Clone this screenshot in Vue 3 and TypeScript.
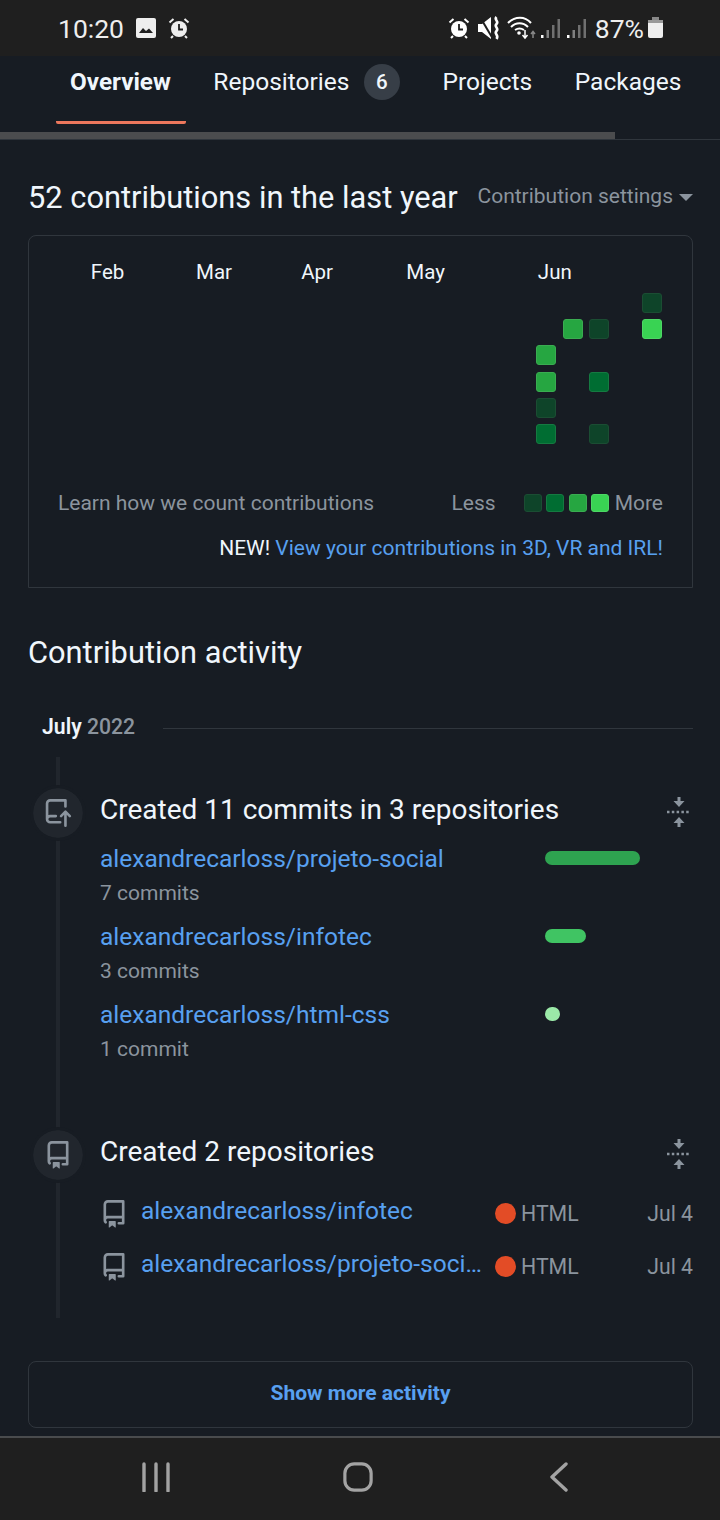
<script setup lang="ts">
const COLS = 23
const ROWS = 7
const levels: Record<string, number> = {
  '22,0': 1, '19,1': 3, '20,1': 1, '22,1': 4, '18,2': 3, '18,3': 3, '20,3': 2,
  '18,4': 1, '18,5': 2, '20,5': 1,
}
const cells: { key: string; level: number }[] = []
for (let r = 0; r < ROWS; r++) {
  for (let c = 0; c < COLS; c++) {
    cells.push({ key: `${c},${r}`, level: levels[`${c},${r}`] ?? 0 })
  }
}
const months = [
  { name: 'Feb', col: 2 }, { name: 'Mar', col: 6 }, { name: 'Apr', col: 10 },
  { name: 'May', col: 14 }, { name: 'Jun', col: 19 },
]
const commits = [
  { repo: 'alexandrecarloss/projeto-social', text: '7 commits', width: 95, cls: 'b1' },
  { repo: 'alexandrecarloss/infotec', text: '3 commits', width: 41, cls: 'b2' },
  { repo: 'alexandrecarloss/html-css', text: '1 commit', width: 15, cls: 'b3' },
]
const created = ['alexandrecarloss/infotec', 'alexandrecarloss/projeto-social']
const repoPath = 'M2 2.5A2.5 2.5 0 014.5 0h8.75a.75.75 0 01.75.75v12.5a.75.75 0 01-.75.75h-2.5a.75.75 0 110-1.5h1.75v-2h-8a1 1 0 00-.714 1.7.75.75 0 01-1.072 1.05A2.495 2.495 0 012 11.5v-9zm10.5-1V9h-8c-.356 0-.694.074-1 .208V2.5a1 1 0 011-1h8zM5 12.25v3.25a.25.25 0 00.4.2l1.45-1.087a.25.25 0 01.3 0L8.6 15.7a.25.25 0 00.4-.2v-3.25a.25.25 0 00-.25-.25h-3.5a.25.25 0 00-.25.25z'
const pushPath = 'M1 2.5A2.5 2.5 0 013.5 0h8.75a.75.75 0 01.75.75v3.5a.75.75 0 01-1.5 0V1.5h-8a1 1 0 00-1 1v6.708A2.492 2.492 0 013.5 9h3.25a.75.75 0 010 1.5H3.5a1 1 0 100 2h5.75a.75.75 0 010 1.5H3.5A2.5 2.5 0 011 11.5v-9zm13.23 7.79a.75.75 0 001.06-1.06l-2.505-2.505a.75.75 0 00-1.06 0L9.22 9.229a.75.75 0 001.06 1.061l1.225-1.224v6.184a.75.75 0 001.5 0V9.066l1.225 1.224z'
</script>

<template>
  <div class="page">
    <div class="status">
      <span class="time">10:20</span>
      <svg class="ic-img" width="20" height="20" viewBox="0 0 20 20"><rect width="20" height="20" rx="2" fill="#eee" /><path d="M3 15l4-5 3 3 3-2.500 4 4.500z" fill="#1f1f1f" /></svg>
      <svg class="ic-alarm" width="22" height="22" viewBox="0 0 22 22"><circle cx="11" cy="12" r="8" fill="#eee" /><path d="M11 7v5.500h4" fill="none" stroke="#1f1f1f" stroke-width="1.800" /><path d="M1.500 5.500L5.500 2M20.500 5.500L16.500 2M5 19l-2 2M17 19l2 2" stroke="#eee" stroke-width="2" /></svg>
      <div class="status-right">
        <svg width="22" height="22" viewBox="0 0 22 22"><circle cx="11" cy="12" r="8" fill="#fff" /><path d="M11 7v5.500h4" fill="none" stroke="#1f1f1f" stroke-width="1.800" /><path d="M1.500 5.500L5.500 2M20.500 5.500L16.500 2M5 19l-2 2M17 19l2 2" stroke="#fff" stroke-width="2" /></svg>
        <svg class="g8" width="22" height="24" viewBox="0 0 22 24"><path d="M0 8h4l9-7v22l-9-7H0z" fill="#fff" /><path d="M2 1l13 22" stroke="#1f1f1f" stroke-width="2" /><path d="M18.500 1c-3 3 3 4 0 7s3 4 0 7 3 4 0 8" fill="none" stroke="#fff" stroke-width="2.600" /></svg>
        <svg class="g7" width="30" height="24" viewBox="0 0 30 24"><path d="M1 7c7-7 17-7 23 0M4 11c5-5 12-5 17 0M8 14c3-2 6-2 9 0" fill="none" stroke="#fff" stroke-width="2" /><circle cx="12" cy="17" r="1.800" fill="#fff" /><path d="M18 14v7M15.500 19l2.500 3 2.500-3" fill="none" stroke="#fff" stroke-width="1.500" /><path d="M26 22v-6M24 18l2-2.500 2 2.500" fill="none" stroke="#888" stroke-width="1.500" /></svg>
        <svg class="g4" width="19" height="22" viewBox="0 0 19 22"><rect x="0" y="18" width="2.500" height="3" fill="#fff" /><rect x="5.500" y="13" width="2.500" height="8" fill="#808080" /><rect x="11" y="8" width="2.500" height="13" fill="#707070" /><rect x="16.500" y="2" width="2.500" height="19" fill="#707070" /></svg>
        <svg class="g7" width="19" height="22" viewBox="0 0 19 22"><rect x="0" y="18" width="2.500" height="3" fill="#fff" /><rect x="5.500" y="13" width="2.500" height="8" fill="#808080" /><rect x="11" y="8" width="2.500" height="13" fill="#707070" /><rect x="16.500" y="2" width="2.500" height="19" fill="#707070" /></svg>
        <span class="pct">87%</span>
        <svg class="g5" width="15" height="22" viewBox="0 0 15 22"><path d="M4 0h7v3H4z" fill="#888" /><path d="M0 3h15v3H0z" fill="#999" /><path d="M0 6h15v13a2 2 0 01-2 2H2a2 2 0 01-2-2z" fill="#eee" /></svg>
      </div>
    </div>

    <nav class="tabs">
      <a class="tab active">Overview</a>
      <a class="tab">Repositories<span class="badge">6</span></a>
      <a class="tab">Projects</a>
      <a class="tab">Packages</a>
    </nav>
    <div class="scrolltrack"><div class="scrollthumb"></div></div>

    <main class="main">
      <div class="contrib-head">
        <h2 class="h">52 contributions in the last year</h2>
        <span class="settings">Contribution settings<i class="caret"></i></span>
      </div>

      <section class="card">
        <div class="months">
          <span v-for="m in months" :key="m.name" class="month" :style="{ gridColumnStart: m.col }">{{ m.name }}</span>
        </div>
        <div class="graph">
          <span v-for="c in cells" :key="c.key" class="cell" :class="'l' + c.level"></span>
        </div>
        <div class="legend-row">
          <span class="muted">Learn how we count contributions</span>
          <div class="legend">
            <span class="muted less">Less</span>
            <span class="cell sm l1"></span><span class="cell sm l2"></span><span class="cell sm l3"></span><span class="cell sm l4"></span>
            <span class="muted more">More</span>
          </div>
        </div>
        <div class="newline"><span class="new">NEW! </span><a class="link">View your contributions in 3D, VR and IRL!</a></div>
      </section>

      <h2 class="h activity">Contribution activity</h2>
      <div class="period"><span class="ptext"><span class="pm">July</span> <span class="py">2022</span></span><i class="rule"></i></div>

      <div class="timeline">
        <article class="item first">
          <span class="node"><svg width="28" height="28" viewBox="0 0 16 16"><path :d="pushPath" fill="#8b949e" fill-rule="evenodd" /></svg></span>
          <div class="body">
            <div class="item-head">
              <span class="item-title">Created 11 commits in 3 repositories</span>
              <svg class="fold" width="26" height="30" viewBox="0 0 26 30"><path d="M11.500 0h3v4h4L13 10 7.500 4h4zM13 20l5.500 6h-4v4h-3v-4h-4z" fill="#8b949e" /><path d="M1 15h24" stroke="#8b949e" stroke-width="2.500" stroke-dasharray="2.500 2.300" /></svg>
            </div>
            <div class="commit-list">
              <div v-for="c in commits" :key="c.repo" class="commit-row">
                <div class="commit-text">
                  <a class="link repo">{{ c.repo }}</a>
                  <div class="commit-count">{{ c.text }}</div>
                </div>
                <span class="bar" :class="c.cls" :style="{ width: c.width + 'px' }"></span>
              </div>
            </div>
          </div>
        </article>

        <article class="item second">
          <span class="node"><svg width="28" height="28" viewBox="0 0 16 16"><path :d="repoPath" fill="#8b949e" fill-rule="evenodd" /></svg></span>
          <div class="body">
            <div class="item-head">
              <span class="item-title">Created 2 repositories</span>
              <svg class="fold" width="26" height="30" viewBox="0 0 26 30"><path d="M11.500 0h3v4h4L13 10 7.500 4h4zM13 20l5.500 6h-4v4h-3v-4h-4z" fill="#8b949e" /><path d="M1 15h24" stroke="#8b949e" stroke-width="2.500" stroke-dasharray="2.500 2.300" /></svg>
            </div>
            <div class="created-list">
              <div v-for="r in created" :key="r" class="created-row">
                <svg class="created-ic" width="28" height="28" viewBox="0 0 16 16"><path :d="repoPath" fill="#8b949e" fill-rule="evenodd" /></svg>
                <a class="link repo created-name">{{ r }}</a>
                <span class="dot"></span>
                <span class="lang">HTML</span>
                <span class="date">Jul 4</span>
              </div>
            </div>
          </div>
        </article>
      </div>

      <button class="more-btn">Show more activity</button>
    </main>

    <footer class="sysnav">
      <svg width="30" height="30" viewBox="0 0 30 30"><path d="M3 2v27M15 2v27M27 2v27" stroke="#a3a3a3" stroke-width="3.400" stroke-linecap="round" fill="none" /></svg>
      <svg class="home" width="30" height="30" viewBox="0 0 32 32"><rect x="2" y="2" width="28" height="28" rx="10" fill="none" stroke="#a3a3a3" stroke-width="3.400" /></svg>
      <svg width="20" height="30" viewBox="0 0 20 30"><path d="M17 2L3 15l14 13" fill="none" stroke="#a3a3a3" stroke-width="3.400" stroke-linecap="round" stroke-linejoin="round" /></svg>
    </footer>
  </div>
</template>

<style scoped>
.page {
  width: 720px;
  height: 1520px;
  overflow: hidden;
  display: flex;
  flex-direction: column;
  background: #171c23;
  color: #f0f6fc;
  font-family: Roboto, "Liberation Sans", sans-serif;
}
.status {
  height: 56px;
  flex: none;
  display: flex;
  align-items: center;
  padding-left: 58px;
  background: #1f1f1f;
  color: #eee;
}
.time { font-size: 26.500px; width: 78px; }
.ic-img { margin-right: 12px; }
.status-right { margin-left: auto; margin-right: 57px; display: flex; align-items: center; }
.g8 { margin-left: 8px; }
.g7 { margin-left: 7px; }
.g4 { margin-left: 4px; }
.g5 { margin-left: 4px; }
.pct { font-size: 26.500px; margin-left: 9px; }

.tabs {
  height: 76px;
  flex: none;
  display: flex;
  padding-left: 56px;
}
.tab {
  height: 68px;
  box-sizing: border-box;
  display: flex;
  align-items: center;
  padding: 0 14px 17px;
  margin-right: 14.500px;
  font-size: 24.500px;
  color: #f0f6fc;
}
.tab.active {
  font-weight: 700;
  padding: 0 15px 14px 14px;
  margin-right: 13.500px;
  font-size: 24.300px;
  border-bottom: 3px solid #ec775c;
  border-radius: 0 0 2px 2px;
}
.badge {
  width: 36px;
  height: 36px;
  margin-left: 14.500px;
  border-radius: 50%;
  background: #373e47;
  font-size: 20.500px;
  font-weight: 500;
  display: flex;
  align-items: center;
  justify-content: center;
}
.scrolltrack {
  flex: none;
  height: 8px;
  border-bottom: 1px solid #30363d;
  box-sizing: border-box;
}
.scrollthumb { width: 615px; height: 7px; background: #4b4c4e; }

.main { flex: 1; min-height: 0; padding: 0 27px 0 28px; }
.contrib-head {
  height: 95px;
  padding-top: 20px;
  box-sizing: border-box;
  display: flex;
  align-items: center;
  justify-content: space-between;
}
.h { margin: 0; font-size: 30.800px; font-weight: 400; color: #f0f6fc; }
.settings { font-size: 21px; color: #8b949e; display: flex; align-items: center; margin-bottom: 4px; }
.caret {
  margin-left: 6px;
  margin-top: 3px;
  border: 7px solid transparent;
  border-top-color: #8b949e;
  border-bottom-width: 0;
}

.card {
  height: 353px;
  box-sizing: border-box;
  border: 1px solid #30363d;
  border-radius: 8px 8px 0 0;
  padding: 24px 29px 0;
}
.months, .graph {
  display: grid;
  grid-template-columns: repeat(23, 20px);
  column-gap: 6.300px;
  margin-left: 5px;
}
.months { height: 33px; }
.month { font-size: 20.500px; line-height: 24px; white-space: nowrap; color: #f0f6fc; margin-left: 1.500px; }
.graph { grid-template-rows: repeat(7, 20px); row-gap: 6.200px; grid-auto-flow: row; }
.cell { width: 20px; height: 20px; border-radius: 3px; box-sizing: border-box; display: block; }
.cell.l0 { background: transparent; }
.cell.l1 { background: #0e4429; border: 1px solid #1b4d33; }
.cell.l2 { background: #006d32; border: 1px solid #157a41; }
.cell.l3 { background: #26a641; border: 1px solid #3aac51; }
.cell.l4 { background: #39d353; border: 1px solid #4dd765; }
.cell.sm { width: 18px; height: 18px; margin-right: 4.500px; }
.legend-row {
  margin-top: 16px;
  height: 34px;
  display: flex;
  align-items: center;
  justify-content: space-between;
}
.muted { font-size: 21px; color: #8b949e; white-space: nowrap; }
.legend { display: flex; align-items: center; }
.less { margin-right: 28px; }
.more { margin-left: 1px; }
.newline { margin-top: 14px; text-align: right; font-size: 21px; line-height: 28px; }
.new { color: #f0f6fc; }
.link { color: #58a0f0; }

.activity { margin-top: 46px; line-height: 38px; }
.period {
  margin-top: 39px;
  margin-left: 14px;
  height: 30px;
  display: flex;
  align-items: center;
  font-size: 21.200px;
}
.ptext { white-space: pre; }
.pm { font-weight: 600; color: #f0f6fc; }
.py { color: #8b949e; font-weight: 500; }
.rule { flex: 1; height: 1px; background: #30363d; margin-left: 28px; margin-top: 4px; }

.timeline { position: relative; margin-top: 16px; height: 561px; }
.timeline::before {
  content: "";
  position: absolute;
  left: 28px;
  top: 0;
  bottom: 0;
  width: 4px;
  background: #21262d;
}
.item { position: relative; display: flex; padding-left: 2px; }
.item.first { height: 370px; padding-top: 28px; box-sizing: border-box; }
.node {
  flex: none;
  width: 50px;
  height: 50px;
  margin-top: 3px;
  margin-left: 3px;
  border-radius: 50%;
  background: #21262d;
  outline: 3px solid #171c23;
  display: flex;
  align-items: center;
  justify-content: center;
}
.body { flex: 1; min-width: 0; margin-left: 17px; margin-top: 6px; }
.item-head { height: 36px; display: flex; align-items: center; justify-content: space-between; }
.item-title { font-size: 28px; color: #f0f6fc; }
.fold { margin-right: 1px; margin-top: 5px; }
.commit-list { margin-top: 15px; }
.commit-row { height: 78px; display: flex; }
.commit-text { width: 445px; }
.repo { font-size: 24.500px; line-height: 34px; display: block; }
.commit-count { font-size: 21px; line-height: 34px; color: #8b949e; }
.bar { height: 14px; margin-top: 9px; border-radius: 7px; }
.b1 { background: #2ea350; }
.b2 { background: #40c463; }
.b3 { background: #9be9a8; }
.created-list { margin-top: 18px; }
.created-row { height: 53px; display: flex; align-items: center; }
.created-ic { flex: none; }
.created-name {
  width: 341px;
  margin-left: 13px;
  margin-bottom: 5px;
  flex: none;
  white-space: nowrap;
  overflow: hidden;
  text-overflow: ellipsis;
}
.dot { flex: none; width: 21px; height: 21px; border-radius: 50%; margin-left: 13px; background: #e34c26; }
.lang { margin-left: 5px; font-size: 21.300px; color: #8b949e; }
.date { margin-left: auto; font-size: 21.200px; color: #8b949e; }

.more-btn {
  display: block;
  width: 100%;
  height: 67px;
  margin-top: 43px;
  padding: 0 0 3px;
  border: 1px solid #30363d;
  border-radius: 8px;
  background: transparent;
  color: #58a0f0;
  font-family: inherit;
  font-size: 21px;
  font-weight: 700;
}
.sysnav {
  flex: none;
  height: 84px;
  box-sizing: border-box;
  border-top: 2px solid #494b4d;
  background: #1f1f1f;
  display: flex;
  align-items: center;
  padding: 0 151px 4px 141px;
  justify-content: space-between;
}
.home { margin-right: 5px; }
</style>
